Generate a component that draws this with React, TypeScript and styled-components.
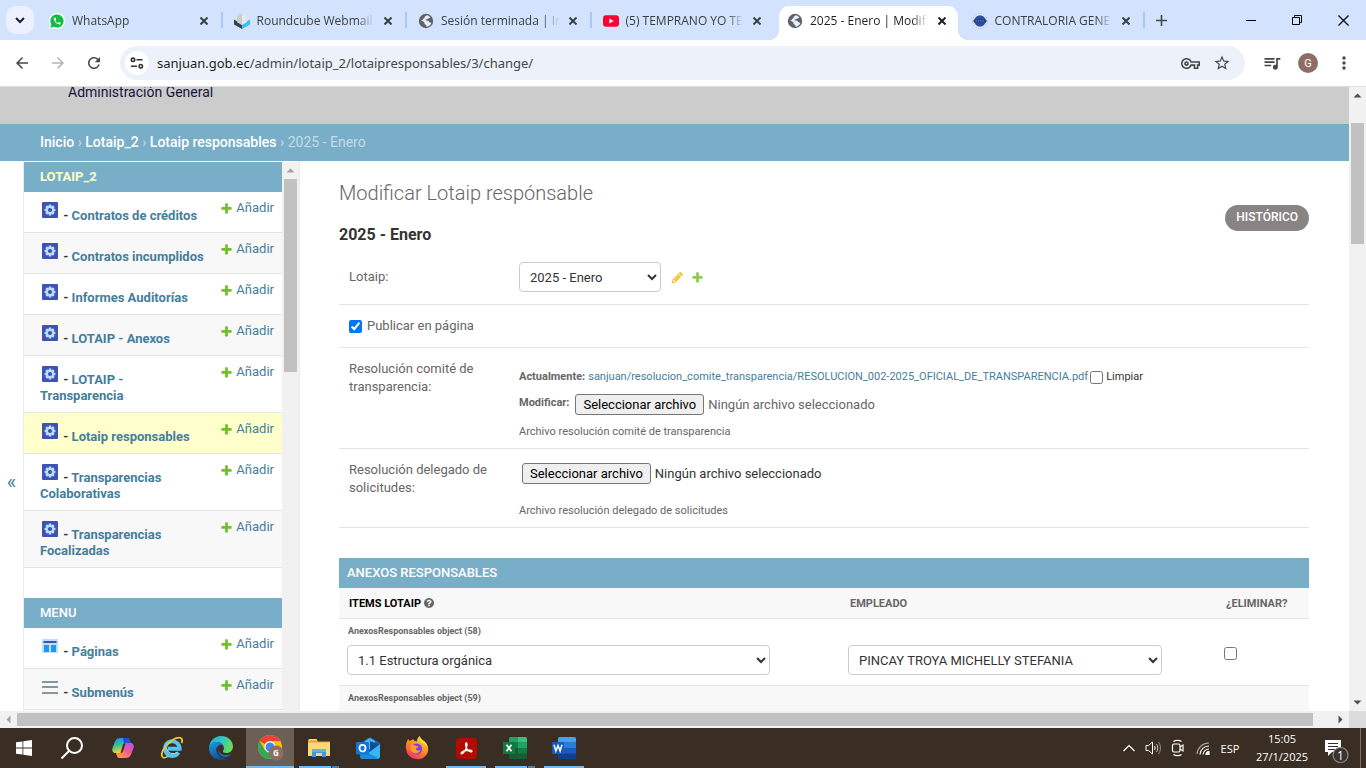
import React, { useRef, useState } from "react";
import styled, { createGlobalStyle, css } from "styled-components";
import {
  MdArrowBack,
  MdArrowForward,
  MdRefresh,
  MdOutlineVpnKey,
  MdStarOutline,
  MdQueueMusic,
  MdMoreVert,
  MdCall,
} from "react-icons/md";

const ui = '"Open Sans", "Noto Sans", sans-serif';

const GlobalStyle = createGlobalStyle`
  * { box-sizing: border-box; }
  body { margin: 0; font-family: Roboto, sans-serif; font-size: 13px; color: #333; background: #fff; }
  button, input, select { font-family: inherit; }
  h1, h2, p { margin: 0; }
  a { text-decoration: none; }
  svg { flex: none; }
`;

const Screen = styled.div`
  display: flex;
  flex-direction: column;
  height: 100vh;
  overflow: hidden;
`;

/* ---------- browser chrome ---------- */

const PlainButton = styled.button`
  display: flex;
  align-items: center;
  justify-content: center;
  padding: 0;
  border: 0;
  background: transparent;
  color: inherit;
`;

const TabStrip = styled.div`
  display: flex;
  flex: none;
  height: 40px;
  padding-left: 6px;
  background: #d3e3fd;
  font-family: ${ui};
`;

const TabSearch = styled(PlainButton)`
  flex: none;
  width: 28px;
  height: 28px;
  margin: 6px 4px 0 0;
  border-radius: 10px;
  background: #ebf1fe;
  color: #1f1f1f;
`;

const TabList = styled.div`
  display: grid;
  flex: 0 1 1107px;
  grid-template-columns: repeat(6, minmax(0, 1fr));
  min-width: 0;
`;

const Tab = styled.div<{ $active?: boolean; $divider?: boolean }>`
  position: relative;
  display: flex;
  align-items: center;
  min-width: 0;
  height: 34px;
  margin-top: 6px;
  padding: 0 15px 5px 11px;
  border-radius: 10px 10px 0 0;
  color: #3c4043;
  ${(p) =>
    p.$active &&
    css`
      margin-left: 3px;
      margin-right: 3px;
      padding: 0 12px 5px 8px;
      background: #fff;
      color: #1f1f1f;
      &::before, &::after {
        content: "";
        position: absolute;
        bottom: 0;
        width: 10px;
        height: 10px;
      }
      &::before {
        right: 100%;
        background: radial-gradient(circle at 0 0, transparent 10px, #fff 10px);
      }
      &::after {
        left: 100%;
        background: radial-gradient(circle at 100% 0, transparent 10px, #fff 10px);
      }
    `}
  ${(p) =>
    p.$divider &&
    css`
      border-radius: 0;
      background: linear-gradient(#a8c7fa, #a8c7fa) right 6px / 2px 16px no-repeat;
    `}
`;

const TabTitle = styled.span`
  flex: 1;
  min-width: 0;
  margin: 0 10px 0 7px;
  overflow: hidden;
  white-space: nowrap;
  font-size: 12px;
  line-height: 20px;
  mask-image: linear-gradient(to right, #000 calc(100% - 16px), transparent);
`;

const WindowButtons = styled.div`
  display: flex;
  margin-left: auto;
  color: #000;
`;

const WindowButton = styled(PlainButton)`
  width: 46px;
  height: 40px;
`;

const NewTab = styled(PlainButton)`
  width: 32px;
  height: 40px;
  color: #474747;
`;

const Toolbar = styled.div`
  display: flex;
  flex: none;
  align-items: center;
  height: 47px;
  border-bottom: 1px solid #dedede;
  background: #fff;
  color: #474747;
`;

const ToolButton = styled(PlainButton)<{ $dim?: boolean }>`
  width: 36px;
  height: 36px;
  color: ${(p) => (p.$dim ? "#b4b4b4" : "#474747")};
`;

const NavButtons = styled.div`
  display: flex;
  padding: 0 8px 0 4px;
`;

const AddressBar = styled.div`
  display: flex;
  flex: 1;
  align-items: center;
  min-width: 0;
  height: 34px;
  padding: 0 7px 0 5px;
  border-radius: 17px;
  background: #ecf1fa;
`;

const SiteInfo = styled(PlainButton)`
  flex: none;
  width: 24px;
  height: 24px;
  margin-right: 8px;
  border-radius: 12px;
  background: #fff;
`;

const Address = styled.div`
  flex: 1;
  min-width: 0;
  overflow: hidden;
  white-space: nowrap;
  font-family: "Noto Sans", "Open Sans", sans-serif;
  font-size: 13px;
  line-height: 20px;
  color: #474747;
  b { font-weight: 400; color: #1f1f1f; }
`;

const AddressButton = styled(PlainButton)`
  width: 32px;
  height: 32px;
`;

const ToolbarEnd = styled.div`
  display: flex;
  align-items: center;
  padding: 0 4px 0 9px;
`;

const Avatar = styled.span`
  display: flex;
  align-items: center;
  justify-content: center;
  width: 20px;
  height: 20px;
  border-radius: 10px;
  background: #8d6e63;
  color: #fff;
  font-size: 11px;
`;

/* ---------- scroll bars ---------- */

const BarArrow = styled(PlainButton)`
  flex: none;
  width: 17px;
  height: 17px;
`;

const BarTrack = styled.div`
  display: flex;
  flex: 1;
  min-width: 0;
  min-height: 0;
`;

const Bar = styled.div<{ $vertical?: boolean }>`
  display: flex;
  flex: none;
  background: #f1f1f1;
  ${(p) =>
    p.$vertical
      ? css`flex-direction: column; width: 17px;`
      : css`height: 17px;`}
`;

const VerticalThumb = styled.div<{ $start: number; $length: number }>`
  width: 13px;
  height: ${(p) => p.$length}px;
  margin: ${(p) => p.$start}px 2px 0;
  background: #c1c1c1;
`;

const HorizontalThumb = styled.div`
  flex: 1;
  height: 13px;
  margin: 2px 19px 2px 0;
  background: #c1c1c1;
`;

const Corner = styled.div`
  width: 17px;
  height: 17px;
  background: #dcdcdc;
`;

const Arrow = ({ turn, dim }: { turn: number; dim?: boolean }) => (
  <svg width="9" height="9" viewBox="0 0 9 9" aria-hidden="true">
    <path d="M0.5 6.5h8l-4-4z" fill={dim ? "#a3a3a3" : "#505050"} transform={`rotate(${turn} 4.5 4.5)`} />
  </svg>
);

function VerticalBar({ start, length, top }: { start: number; length: number; top?: boolean }) {
  return (
    <Bar $vertical>
      <BarArrow aria-label="Subir"><Arrow turn={0} dim={top} /></BarArrow>
      <BarTrack><VerticalThumb $start={start} $length={length} /></BarTrack>
      {!top && <BarArrow aria-label="Bajar"><Arrow turn={180} /></BarArrow>}
    </Bar>
  );
}

/* ---------- page ---------- */

const Viewport = styled.div`
  display: flex;
  flex: 1;
  min-height: 0;
`;

const Page = styled.div`
  display: flex;
  flex: 1;
  flex-direction: column;
  min-width: 0;
  overflow: hidden;
`;

const SiteHeader = styled.header`
  flex: none;
  height: 37px;
  padding-left: 68px;
  overflow: hidden;
  background: #ccc;
  color: #14143c;
  font-size: 14px;
  line-height: 10px;
`;

const Breadcrumbs = styled.nav`
  flex: none;
  padding: 8px 40px 9px;
  background: #79aec8;
  color: #c4dce8;
  font-size: 14px;
  line-height: 20px;
  a { color: #fff; font-weight: 500; }
`;

const Body = styled.div`
  display: flex;
  flex: 1;
  min-height: 0;
`;

const NavToggle = styled(PlainButton)`
  flex: none;
  align-items: flex-start;
  width: 24px;
  padding-top: 309px;
  border-right: 1px solid #eaeaea;
  color: #447e9b;
  font-size: 20px;
  line-height: 24px;
`;

const Sidebar = styled.nav`
  display: flex;
  flex: none;
  width: 276px;
  padding-top: 1px;
  border-right: 1px solid #eaeaea;
`;

const SidebarScroll = styled.div`
  flex: 1;
  overflow: hidden;
`;

const AppTable = styled.table`
  width: 100%;
  margin-bottom: 30px;
  border-collapse: collapse;
  table-layout: fixed;
`;

const AppCaption = styled.caption<{ $current?: boolean }>`
  height: 30px;
  padding: 7px 16px;
  background: #79aec8;
  text-align: left;
  line-height: 16px;
  font-weight: ${(p) => (p.$current ? 700 : 500)};
  a { color: ${(p) => (p.$current ? "#ffc" : "#fff")}; }
`;

const ModelRow = styled.tr<{ $current: boolean }>`
  border-bottom: 1px solid #e4e4e4;
  background: #fff;
  line-height: 16px;
  &:nth-child(even) { background: #f8f8f8; }
  ${(p) => p.$current && css`&& { background: #ffc; }`}
`;

const ModelName = styled.th`
  padding: 8px 4px 8px 16px;
  text-align: left;
  vertical-align: top;
  font-weight: 700;
  a { color: #447e9b; }
`;

const ModelAdd = styled.td`
  width: 70px;
  padding: 8px 8px 8px 0;
  vertical-align: top;
  text-align: right;
`;

const AddLink = styled.a`
  display: inline-flex;
  align-items: center;
  gap: 3px;
  color: #447e9b;
`;

const Main = styled.main`
  flex: 1;
  min-width: 0;
  padding: 20px 40px 0 39px;
  overflow: hidden;
`;

const Heading = styled.div`
  display: flex;
  justify-content: space-between;
  align-items: flex-start;
  margin-bottom: 5px;
`;

const PageTitle = styled.h1`
  margin-bottom: 20px;
  color: #666;
  font-size: 20px;
  font-weight: 300;
  line-height: 24px;
`;

const ObjectTitle = styled.h2`
  font-size: 16px;
  font-weight: 700;
  line-height: 20px;
`;

const HistoryLink = styled.a`
  margin-top: 24px;
  padding: 4px 11px 6px;
  border-radius: 15px;
  background: #888484;
  color: #fff;
  font-size: 12px;
  font-weight: 500;
  line-height: 16px;
  text-transform: uppercase;
`;

const FormRow = styled.div<{ $file?: boolean }>`
  display: flex;
  padding: 12px 10px ${(p) => (p.$file ? 9 : 12)}px;
  border-bottom: 1px solid #e4e4e4;
  line-height: 18px;
`;

const FieldLabel = styled.label`
  flex: none;
  width: 170px;
  padding-right: 10px;
  color: #666;
`;

const SelectLine = styled.div`
  display: flex;
  flex: 1;
  align-items: center;
  label { line-height: 30px; }
`;

const RelatedLinks = styled.div`
  display: flex;
  gap: 7px;
  margin-left: 10px;
`;

const IconLink = styled.a`
  display: flex;
  opacity: 0.8;
`;

const Select = styled.select<{ $width: number }>`
  display: block;
  width: ${(p) => p.$width}px;
  max-width: 100%;
  height: 30px;
  padding: 0 6px;
  border: 1px solid #ccc;
  border-radius: 4px;
  background: #fff;
  color: #333;
  font-size: 13px;
`;

const Check = styled.input`
  width: 13px;
  height: 13px;
  margin: 0;
`;

const CheckLabel = styled.label`
  display: flex;
  gap: 5px;
  align-items: center;
  color: #666;
`;

const FieldBody = styled.div`
  flex: 1;
  min-width: 0;
`;

const Current = styled.div`
  display: flex;
  align-items: center;
  gap: 2px;
  margin: 8px 0;
  font-size: 11px;
  a { color: #447e9b; }
  b { color: #666; margin-right: 1px; }
`;

const ClearLabel = styled.label`
  display: flex;
  gap: 3px;
  align-items: center;
`;

const FileLine = styled.div<{ $inset?: boolean }>`
  display: flex;
  align-items: center;
  gap: 4px;
  height: 21px;
  margin: ${(p) => (p.$inset ? "2px 0 0 3px" : "0")};
  color: ${(p) => (p.$inset ? "#333" : "#666")};
  label { align-self: flex-start; margin-right: 2px; font-size: 11px; font-weight: 700; line-height: 18px; }
`;

const FileButton = styled.button`
  height: 21px;
  padding: 0 7px;
  border: 1px solid #767676;
  border-radius: 3px;
  background: #efefef;
  color: #000;
  font-size: 13px;
  line-height: 19px;
`;

const Help = styled.p<{ $gap: number }>`
  margin-top: ${(p) => p.$gap}px;
  color: #666;
  font-size: 11px;
  line-height: 14px;
`;

const Inline = styled.section`
  margin-top: 30px;
`;

const InlineTitle = styled.h2`
  padding: 7px 8px;
  background: #79aec8;
  color: #fff;
  font-size: 13px;
  font-weight: 500;
  line-height: 16px;
`;

const InlineTable = styled.table`
  width: 100%;
  border-collapse: collapse;
  table-layout: fixed;
`;

const HeadCell = styled.th<{ $width?: number; $required?: boolean }>`
  width: ${(p) => (p.$width ? `${p.$width}px` : "auto")};
  padding: 8px 10px 6px;
  border-bottom: 1px solid #e4e4e4;
  background: #f8f8f8;
  color: ${(p) => (p.$required ? "#000" : "#666")};
  text-align: left;
  font-size: 11px;
  font-weight: 700;
  line-height: 16px;
  svg { vertical-align: -1px; }
`;

const InlineRow = styled.tr`
  border-bottom: 1px solid #e4e4e4;
  &:nth-child(even) { background: #f8f8f8; }
`;

const Cell = styled.td<{ $check?: boolean }>`
  padding: 4px 8px ${(p) => (p.$check ? 25 : 10)}px;
  vertical-align: bottom;
  line-height: 0;
`;

const Original = styled.p`
  margin: 0 1px 6px;
  color: #666;
  font-size: 9px;
  font-weight: 700;
  line-height: 16px;
`;

/* ---------- taskbar ---------- */

const Taskbar = styled.footer`
  display: flex;
  flex: none;
  align-items: stretch;
  height: 40px;
  background: #3a2e24;
  color: #fff;
  font-family: ${ui};
`;

const TaskSystem = styled.div`
  display: flex;
  margin-right: 3px;
`;

const TaskApps = styled.div`
  display: flex;
  gap: 1px;
`;

type Mark = "none" | "full" | "single" | "stack";

const marks: Record<Mark, string> = {
  none: "none",
  full: "linear-gradient(#76b9ed, #76b9ed) left bottom / 48px 2px no-repeat, #6b6058",
  single: "linear-gradient(#76b9ed, #76b9ed) 4px bottom / 40px 2px no-repeat",
  stack:
    "linear-gradient(to right, #76b9ed 32px, #3a2e24 32px, #3a2e24 33px, #56809f 33px) 4px bottom / 40px 2px no-repeat",
};

const TaskButton = styled(PlainButton)<{ $mark?: Mark }>`
  width: 48px;
  background: ${(p) => marks[p.$mark ?? "none"]};
`;

const Tray = styled.div`
  display: flex;
  align-items: center;
  margin-left: auto;
  font-size: 11px;
  line-height: 18px;
`;

const TrayButton = styled(PlainButton)<{ $width: number }>`
  width: ${(p) => p.$width}px;
  height: 40px;
  font-size: 11px;
`;

const Clock = styled.div`
  width: 76px;
  text-align: center;
`;

const ShowDesktop = styled.div`
  width: 6px;
  height: 40px;
  border-left: 1px solid #7a726b;
`;

/* ---------- drawings ---------- */

const Cross = ({ size = 8, width = 2 }: { size?: number; width?: number }) => (
  <svg width={size} height={size} viewBox={`0 0 ${size} ${size}`} stroke="currentColor" strokeWidth={width}>
    <path d={`M.5 .5l${size - 1} ${size - 1}M${size - 0.5} .5l-${size - 1} ${size - 1}`} />
  </svg>
);

const WhatsappIcon = () => (
  <svg width="16" height="16" viewBox="0 0 16 16">
    <circle cx="8" cy="8" r="8" fill="#f4fff6" />
    <path d="M0 16l1.2-4.5 3.4 3.3z" fill="#f4fff6" />
    <path d="M1.3 14.7l1-3.3A6.6 6.6 0 1 1 4.8 13.8z" fill="#12bd45" />
    <MdCall x="3.6" y="3.6" size={9} color="#fff" />
  </svg>
);

const RoundcubeIcon = () => (
  <svg width="16" height="16" viewBox="0 0 16 16">
    <path d="M0 6.500l8 4.500v5L0 11.500z" fill="#37424a" />
    <path d="M16 6.500l-8 4.500v5l8-4.500z" fill="#37beff" />
    <path d="M3 5.500a5 5 0 0 1 10 0V9l-5 3-5-3z" fill="#e6e8e8" />
    <path d="M8 .5a5 5 0 0 0-5 5V9l5 3z" fill="#c9cdcc" />
  </svg>
);

const GlobeIcon = () => (
  <svg width="16" height="16" viewBox="0 0 16 16">
    <circle cx="8" cy="8" r="7.2" fill="#5f6368" />
    <path d="M8.600 2.300c1.500.2 3 1 3.900 2.200-.9.300-1.400 1-2.400 1-.9 0-1 .9-1.900 1-.9.2-.7 1 .1 1.100 1.200.1 2.300.2 2.700 1.200.2.800.9.600 1.600.7.500.2.700.7.500 1.200-.9 1.700-2.500 2.900-4.700 3 .1-1.100-.2-1.900-1.100-2.100-.9-.3-.9-1.200-.8-2L2.600 6.700c.3 0 .5.3 1.200.3.900 0 1.300-.2 1.300-1 0-.7 1.200-.4 1.500-1.100.1-.5-.2-.9.4-1.300.5-.4 1.300-.6 1.600-1.300z" fill="#e8eefb" />
  </svg>
);

const YoutubeIcon = () => (
  <svg width="16" height="16" viewBox="0 0 16 16">
    <rect y="2.300" width="16" height="11.400" rx="3" fill="#f03" />
    <path d="M6.300 5.500v5L10.700 8z" fill="#fff" />
  </svg>
);

const SealIcon = () => (
  <svg width="16" height="16" viewBox="0 0 16 16">
    <circle cx="8" cy="8" r="7.400" fill="#e9effc" stroke="#a9bce4" strokeDasharray="1.500 1" />
    <circle cx="8" cy="8" r="5.800" fill="#2b4fa0" />
    <rect x="1.500" y="6.500" width="13" height="3" rx="1" fill="#203a80" />
    <path d="M3.500 8h9" stroke="#93a9d8" strokeWidth=".8" strokeDasharray="1.500 .8" />
  </svg>
);

const TuneIcon = () => (
  <svg width="14" height="14" viewBox="0 0 14 14" fill="none" stroke="#333" strokeWidth="1.600">
    <circle cx="3" cy="3.800" r="1.700" />
    <path d="M6.500 3.800H12.500M1 10.200H7" />
    <circle cx="10.800" cy="10.200" r="1.700" />
  </svg>
);

const GearTile = () => (
  <svg width="20" height="20" viewBox="0 0 20 20">
    <rect x="2" y="2" width="16" height="16" rx="1" fill="#3f51b5" />
    <g fill="#bbdefb">
      {[0, 45, 90, 135].map((a) => (
        <rect key={a} x="8.700" y="4.600" width="2.600" height="10.800" rx=".5" transform={`rotate(${a} 10 10)`} />
      ))}
      <circle cx="10" cy="10" r="4.100" />
    </g>
    <circle cx="10" cy="10" r="2.100" fill="#3f51b5" />
  </svg>
);

const PagesIcon = () => (
  <svg width="20" height="20" viewBox="0 0 20 20">
    <rect x="2" y="3" width="16" height="14" fill="#bbdefb" />
    <rect x="3.500" y="5" width="13" height="2" fill="#3f51b5" />
    <path d="M4 9h5v7H4zM11 9h5v7h-5z" fill="#2196f3" />
  </svg>
);

const MenuIcon = () => (
  <svg width="20" height="20" viewBox="0 0 20 20" stroke="#8497a2" strokeWidth="2">
    <path d="M2 5h16M2 10h16M2 16h16" />
  </svg>
);

const PlusIcon = () => (
  <svg width="13" height="13" viewBox="0 0 1792 1792" fill="#70bf2b">
    <path d="M1600 796v192q0 40-28 68t-68 28h-416v416q0 40-28 68t-68 28h-192q-40 0-68-28t-28-68v-416h-416q-40 0-68-28t-28-68v-192q0-40 28-68t68-28h416v-416q0-40 28-68t68-28h192q40 0 68 28t28 68v416h416q40 0 68 28t28 68z" />
  </svg>
);

const PencilIcon = () => (
  <svg width="13" height="13" viewBox="0 0 1792 1792" fill="#efb80b">
    <path d="M491 1536l91-91-235-235-91 91v107h128v128h107zm523-928q0-22-22-22-10 0-17 7l-542 542q-7 7-7 17 0 22 22 22 10 0 17-7l542-542q7-7 7-17zm-54-192l416 416-832 832h-416v-416zm683 96q0 53-37 90l-166 166-416-416 166-165q36-38 90-38 53 0 91 38l235 234q37 39 37 91z" />
  </svg>
);

const HelpIcon = () => (
  <svg width="10" height="10" viewBox="128 128 1536 1536" fill="#666">
    <path d="M1024 1376v-192q0-14-9-23t-23-9h-192q-14 0-23 9t-9 23v192q0 14 9 23t23 9h192q14 0 23-9t9-23zm256-672q0-88-55.5-163t-138.5-116-170-41q-243 0-371 213-15 24 8 42l132 100q7 6 19 6 16 0 25-12 53-68 86-92 34-24 86-24 48 0 85.500 26t37.500 59q0 38-20 61t-68 45q-63 28-115.500 86.500t-52.500 125.500v36q0 14 9 23t23 9h192q14 0 23-9t9-23q0-19 21.500-49.500t54.500-49.500q32-18 49-28.500t46-35 44.500-48 28-60.500 12.500-81zm384 192q0 209-103 385.500t-279.500 279.500-385.500 103-385.500-103-279.500-279.500-103-385.500 103-385.500 279.500-279.500 385.500-103 385.500 103 279.500 279.500 103 385.500z" />
  </svg>
);

const WindowsIcon = () => (
  <svg width="16" height="16" viewBox="0 0 16 16" fill="#fff">
    <path d="M0 2.300l6.500-.9v6.200H0zM7.300 1.300L16 0v7.600H7.300zM0 8.400h6.500v6.200L0 13.700zM7.300 8.400H16V16l-8.700-1.300z" />
  </svg>
);

const SearchIcon = () => (
  <svg width="24" height="24" viewBox="0 0 24 24" fill="none" stroke="#fff" strokeWidth="2">
    <circle cx="14.500" cy="9.500" r="7.500" />
    <path d="M9 15l-7.500 7.500" />
  </svg>
);

const CopilotIcon = () => (
  <svg width="24" height="24" viewBox="0 0 24 24">
    <defs>
      <linearGradient id="cpA" x1="0" y1="0" x2="0.300" y2="1">
        <stop offset="0" stopColor="#1b8df0" /><stop offset=".5" stopColor="#2fbf9b" /><stop offset="1" stopColor="#ffd02e" />
      </linearGradient>
      <linearGradient id="cpB" x1="1" y1="0" x2="0.300" y2="1">
        <stop offset="0" stopColor="#a45cf5" /><stop offset=".5" stopColor="#f0559b" /><stop offset="1" stopColor="#ff9a4a" />
      </linearGradient>
    </defs>
    <path d="M10 2h6c1.500 0 2.200.8 2.700 2.500L19.500 7h-5c-1.500 0-2.300.8-2.800 2.500L9.500 17H4.500C1.500 17 .9 14.500 1.500 12L4 5.500C4.900 3 6.500 2 10 2z" fill="url(#cpA)" />
    <path d="M12 2h4c1.500 0 2.200.8 2.700 2.500L19.500 7h-5L13 8z" fill="#1d4fd8" />
    <path d="M14 22H8.500c-1.500 0-2.200-.8-2.700-2.500L5 17h4.500c1.500 0 2.300-.8 2.800-2.500L14.500 7h5c3 0 3.600 2.500 3 5L20 18.500c-.9 2.500-2.500 3.500-6 3.500z" fill="url(#cpB)" />
  </svg>
);

const ExplorerEIcon = () => (
  <svg width="24" height="24" viewBox="0 0 24 24" fill="none">
    <path d="M18.500 16.500A7.300 7.300 0 1 1 19.600 12.800H8" stroke="#53c3ef" strokeWidth="4" />
    <path d="M17.500 16A6.600 6.600 0 0 1 6.500 12" stroke="#a4e4fa" strokeWidth="1" />
    <path d="M2.800 21.300C-.5 18 5 8.500 12.500 4S23.800 2.300 21.500 7" stroke="#f5c52d" strokeWidth="1.800" />
    <path d="M2.800 21.300c1.500 1 4-.2 5.500-1.300" stroke="#f5c52d" strokeWidth="1.500" />
  </svg>
);

const EdgeIcon = () => (
  <svg width="24" height="24" viewBox="0 0 24 24">
    <defs>
      <linearGradient id="edA" x1="0" y1="0" x2="1" y2="0.300">
        <stop offset="0" stopColor="#1fa7e0" /><stop offset=".6" stopColor="#35c6c0" /><stop offset="1" stopColor="#66dc55" />
      </linearGradient>
      <linearGradient id="edB" x1="0" y1="0" x2="0.500" y2="1">
        <stop offset="0" stopColor="#1d9be0" /><stop offset="1" stopColor="#0b4fa0" />
      </linearGradient>
    </defs>
    <path d="M0 11.500C.5 5 5.500 0 12 0c7 0 12 5 12 10.500 0 4-3 6.500-6.300 6.500-3 0-4.200-1-3.700-2 .8-1 1-1.700.9-3C14.600 8.500 11.500 6 8 6c-4 0-7 2.500-8 5.500z" fill="url(#edA)" />
    <path d="M0 12c0-4 4-6 8-6 2.500 0 5 1 6.300 3C10 7.500 7 11 7.300 14.500c.4 4.500 5 8.500 10.200 7.800C12 26 0 23 0 12z" fill="url(#edB)" />
    <path d="M9 13c-.5 4 3 8.500 8 8 2.500-.3 4.500-1.800 5.500-3.500-3 2-9 2.500-12-1C9.500 15.500 9 14.500 9 13z" fill="#1273c4" />
  </svg>
);

const ChromeIcon = () => (
  <svg width="28" height="26" viewBox="0 0 28 26">
    <circle cx="14" cy="12" r="12" fill="#fbbc04" />
    <path d="M3.600 6A12 12 0 0 1 24.400 6H14a6 6 0 0 0-5.200 3z" fill="#ea4335" />
    <path d="M3.600 6A12 12 0 0 0 14 24l5.200-9H8.800z" fill="#34a853" />
    <circle cx="14" cy="12" r="5.700" fill="#fff" />
    <circle cx="14" cy="12" r="4.500" fill="#4285f4" />
    <circle cx="20" cy="18" r="7.500" fill="#8d6e63" />
    <text x="20" y="21" textAnchor="middle" fontSize="8" fontWeight="700" fontFamily="Open Sans, sans-serif" fill="#fff">G</text>
  </svg>
);

const FolderIcon = () => (
  <svg width="22" height="20" viewBox="0 0 22 20">
    <path d="M0 1.500h8l2 2h12V18H0z" fill="#e8a33d" />
    <path d="M1 1h7.500l1 1.500H1z" fill="#f8d779" />
    <path d="M0 4.500h22V18H0z" fill="#fcd978" />
    <path d="M4 11h14v8h-4v-4H8v4H4z" fill="#3b9ae0" />
    <path d="M4 11h14v3H4z" fill="#5bb3f0" />
  </svg>
);

const OutlookIcon = () => (
  <svg width="24" height="22" viewBox="0 0 24 22">
    <path d="M4 6L14 0l10 6v13a2 2 0 0 1-2 2H6z" fill="#1066b5" />
    <path d="M9 4l5-3 5 3v8H9z" fill="#50b8f0" />
    <path d="M14 4l10 4-10 8z" fill="#0f4d9b" />
    <path d="M24 7v12a3 3 0 0 1-3 3H6l9-8z" fill="#35b8f1" />
    <path d="M4 12l19 9.500-2 .5H6a2 2 0 0 1-2-2z" fill="#1e8bdc" />
    <rect y="5" width="13" height="12.500" rx="1.500" fill="#0f78d4" />
    <ellipse cx="6.500" cy="11.200" rx="3" ry="3.300" fill="none" stroke="#fff" strokeWidth="1.700" />
  </svg>
);

const FirefoxIcon = () => (
  <svg width="24" height="24" viewBox="0 0 24 24">
    <defs>
      <linearGradient id="ffA" x1="0.800" y1="0" x2="0.200" y2="1">
        <stop offset="0" stopColor="#ffe13a" /><stop offset=".5" stopColor="#ff8a1f" /><stop offset="1" stopColor="#f5286b" />
      </linearGradient>
    </defs>
    <path d="M1 13C0 8 2.500 5 3 3c1 .6 1.600 1.600 2 2.500C6 4 7 3.500 8.500 3.500 9 4.500 10 5.500 12 5.500 11.500 3 13.500 1 15 0c0 3 3 4 5 6 3.500 3.500 4 8 2 12a11.500 11.500 0 0 1-21-5z" fill="url(#ffA)" />
    <circle cx="11.500" cy="13" r="5.600" fill="#7542e5" />
    <path d="M5.500 9.500c2-1.200 4-.8 5.500.5 1.500 0 2.500.3 2.500 1.200-1.500.4-2.500 1-2.500 2 .7 1.400 2.800 1.800 4.500.6-1 4-6.500 5-9 1.500-1.300-1.800-1.500-4-1-5.800z" fill="#ff9a2b" />
    <path d="M15 0c0 3 3 4 5 6 1.500 1.500 2.400 3.500 2.600 5.500-1-2-2-3-3.100-3.500C17 7 14 5.500 15 0z" fill="#ffe24a" />
  </svg>
);

const AcrobatIcon = () => (
  <svg width="21" height="21" viewBox="0 0 21 21">
    <rect width="21" height="21" rx="3.500" fill="#b30b00" />
    <path d="M10.200 5c1.400 0 .8 3.200-.2 5.500-1.100 2.500-3 5.300-4.300 5.300-1.600-.3.200-2.600 4.300-3.300 3.500-.7 6-.5 6 .6-.1 1.600-3.500.6-5-2C9.900 9.200 9 5 10.200 5z" fill="none" stroke="#fff" strokeWidth="1.300" />
  </svg>
);

const ExcelIcon = () => (
  <svg width="24" height="22" viewBox="0 0 24 22">
    <rect x="6" width="18" height="22" rx="1.500" fill="#185c37" />
    <path d="M6 1.500A1.500 1.500 0 0 1 7.500 0H15v5.500H6z" fill="#21a366" />
    <path d="M15 0h7.500A1.500 1.500 0 0 1 24 1.500v4h-9z" fill="#33c481" />
    <path d="M6 5.500h9V11H6zM15 11h9v5.500h-9z" fill="#107c41" />
    <path d="M15 5.500h9V11h-9z" fill="#21a366" />
    <rect y="5" width="12" height="12" rx="1" fill="#0f7a40" />
    <path d="M3.500 7.700l5 6.600M8.500 7.700l-5 6.600" stroke="#fff" strokeWidth="1.700" />
  </svg>
);

const WordIcon = () => (
  <svg width="24" height="22" viewBox="0 0 24 22">
    <rect x="6" width="18" height="22" rx="1.500" fill="#103f91" />
    <path d="M6 5.500v-4A1.500 1.500 0 0 1 7.500 0h15A1.500 1.500 0 0 1 24 1.500v4z" fill="#41a5ee" />
    <path d="M6 5.500h18V11H6z" fill="#2b7cd3" />
    <path d="M6 11h18v5.500H6z" fill="#185abd" />
    <rect y="5" width="12" height="12" rx="1" fill="#185abd" />
    <path d="M2 7.800l1.900 6.200L6 8.500 8.100 14 10 7.800" fill="none" stroke="#fff" strokeWidth="1.500" />
  </svg>
);

const SpeakerIcon = () => (
  <svg width="17" height="16" viewBox="0 0 17 16" fill="none" stroke="#fff">
    <path d="M1 5.500h2.500l4-3.500v12l-4-3.500H1z" />
    <path d="M9.500 6c.8 1.200.8 2.800 0 4" />
    <path d="M11.500 4c1.700 2.400 1.700 5.600 0 8" opacity=".7" />
    <path d="M13.500 2c2.600 3.500 2.600 8.500 0 12" opacity=".45" />
  </svg>
);

const MeetIcon = () => (
  <svg width="14" height="18" viewBox="0 0 14 18" fill="none" stroke="#fff" strokeWidth="1.200">
    <rect x="1.500" y="5" width="7.500" height="8" rx="1.500" />
    <path d="M9 8l3-2v6l-3-2M2.500 2.500c2-1.500 6-1.500 8 0M2.500 15.500c2 1.500 6 1.500 8 0" />
  </svg>
);

const WifiIcon = () => (
  <svg width="14" height="14" viewBox="0 0 14 14" fill="none" stroke="#fff" strokeWidth="1.100">
    <path d="M1 13A12 12 0 0 1 13 2" opacity=".6" />
    <path d="M4 13.500A9 9 0 0 1 13 5M7 13.500a6 6 0 0 1 6-5.500" />
    <path d="M10 13.500a3 3 0 0 1 3-3V13.500z" fill="#fff" />
  </svg>
);

const NoticeIcon = () => (
  <svg width="34" height="32" viewBox="0 0 34 32">
    <path d="M2 8h16v12h-9l-4 4v-4H2z" fill="#fff" />
    <path d="M5 11.500h10M5 14.500h10M5 17.500h7" stroke="#3a2e24" />
    <circle cx="17.500" cy="23" r="7.500" fill="#37342f" stroke="#8d8d8d" strokeWidth="1.200" />
    <text x="17.500" y="27.500" textAnchor="middle" fontSize="12" fontFamily="Open Sans, sans-serif" fill="#fff">1</text>
  </svg>
);

/* ---------- data ---------- */

const tabs = [
  { title: "WhatsApp", icon: <WhatsappIcon />, divider: true },
  { title: "Roundcube Webmail", icon: <RoundcubeIcon />, divider: true },
  { title: "Sesión terminada | Inf", icon: <GlobeIcon />, divider: true },
  { title: "(5) TEMPRANO YO TE", icon: <YoutubeIcon /> },
  { title: "2025 - Enero | Modific", icon: <GlobeIcon />, active: true },
  { title: "CONTRALORIA GENE", icon: <SealIcon />, divider: true },
];

const lotaipModels = [
  "Contratos de créditos",
  "Contratos incumplidos",
  "Informes Auditorías",
  "LOTAIP - Anexos",
  "LOTAIP - Transparencia",
  "Lotaip responsables",
  "Transparencias Colaborativas",
  "Transparencias Focalizadas",
].map((name) => ({ name, icon: <GearTile /> }));

const menuModels = [
  { name: "Páginas", icon: <PagesIcon /> },
  { name: "Submenús", icon: <MenuIcon /> },
];

const annexes = [
  { id: 58, item: "1.1 Estructura orgánica", person: "PINCAY TROYA MICHELLY STEFANIA" },
  { id: 59, item: "1.1 Estructura orgánica", person: "PINCAY TROYA MICHELLY STEFANIA" },
];

/* ---------- parts ---------- */

function AppGroup({ title, current, models }: {
  title: string;
  current?: string;
  models: { name: string; icon: React.ReactNode }[];
}) {
  return (
    <AppTable>
      <AppCaption $current={!!current}><a href="#app">{title}</a></AppCaption>
      <tbody>
        {models.map((m) => (
          <ModelRow key={m.name} $current={m.name === current}>
            <ModelName scope="row">{m.icon} - <a href="#model">{m.name}</a></ModelName>
            <ModelAdd><AddLink href="#add"><PlusIcon />Añadir</AddLink></ModelAdd>
          </ModelRow>
        ))}
      </tbody>
    </AppTable>
  );
}

function FilePicker({ id, label, inset }: { id: string; label?: string; inset?: boolean }) {
  const input = useRef<HTMLInputElement>(null);
  const [name, setName] = useState("Ningún archivo seleccionado");
  return (
    <FileLine $inset={inset}>
      {label && <label htmlFor={id}>{label}</label>}
      <input ref={input} type="file" hidden onChange={(e) => setName(e.target.files?.[0]?.name ?? name)} />
      <FileButton id={id} type="button" onClick={() => input.current?.click()}>Seleccionar archivo</FileButton>
      <span>{name}</span>
    </FileLine>
  );
}

export default function App() {
  return (
    <Screen>
      <GlobalStyle />
      <TabStrip>
        <TabSearch aria-label="Buscar pestañas">
          <svg width="10" height="10" viewBox="0 0 10 10" fill="none" stroke="currentColor" strokeWidth="2"><path d="M1 3l4 4 4-4" /></svg>
        </TabSearch>
        <TabList>
          {tabs.map((t) => (
            <Tab key={t.title} $active={t.active} $divider={t.divider}>
              {t.icon}
              <TabTitle>{t.title}</TabTitle>
              <PlainButton aria-label="Cerrar pestaña"><Cross /></PlainButton>
            </Tab>
          ))}
        </TabList>
        <NewTab aria-label="Nueva pestaña">
          <svg width="11" height="11" viewBox="0 0 11 11" stroke="currentColor" strokeWidth="1.600"><path d="M5.500 0v11M0 5.500h11" /></svg>
        </NewTab>
        <WindowButtons>
          <WindowButton aria-label="Minimizar">
            <svg width="10" height="10" viewBox="0 0 10 10" stroke="currentColor"><path d="M0 5.500h10" /></svg>
          </WindowButton>
          <WindowButton aria-label="Restaurar">
            <svg width="10" height="10" viewBox="0 0 10 10" fill="none" stroke="currentColor"><path d="M.5 2.500h7v7h-7zM2.500 2.500v-2h7v7h-2" /></svg>
          </WindowButton>
          <WindowButton aria-label="Cerrar"><Cross size={11} width={1.2} /></WindowButton>
        </WindowButtons>
      </TabStrip>

      <Toolbar>
        <NavButtons>
          <ToolButton aria-label="Atrás"><MdArrowBack size={18} /></ToolButton>
          <ToolButton aria-label="Adelante" $dim><MdArrowForward size={18} /></ToolButton>
          <ToolButton aria-label="Recargar"><MdRefresh size={18} /></ToolButton>
        </NavButtons>
        <AddressBar>
          <SiteInfo aria-label="Información del sitio"><TuneIcon /></SiteInfo>
          <Address><b>sanjuan.gob.ec</b>/admin/lotaip_2/lotaipresponsables/3/change/</Address>
          <AddressButton aria-label="Contraseñas"><MdOutlineVpnKey size={19} /></AddressButton>
          <AddressButton aria-label="Favorito"><MdStarOutline size={18} /></AddressButton>
        </AddressBar>
        <ToolbarEnd>
          <ToolButton aria-label="Control multimedia"><MdQueueMusic size={20} /></ToolButton>
          <ToolButton aria-label="Perfil"><Avatar>G</Avatar></ToolButton>
          <ToolButton aria-label="Menú"><MdMoreVert size={20} /></ToolButton>
        </ToolbarEnd>
      </Toolbar>

      <Viewport>
        <Page>
          <SiteHeader>Administración General</SiteHeader>
          <Breadcrumbs>
            <a href="#home">Inicio</a> › <a href="#app">Lotaip_2</a> › <a href="#list">Lotaip responsables</a> › 2025 - Enero
          </Breadcrumbs>
          <Body>
            <NavToggle aria-label="Alternar navegación">«</NavToggle>
            <Sidebar>
              <SidebarScroll>
                <AppGroup title="LOTAIP_2" current="Lotaip responsables" models={lotaipModels} />
                <AppGroup title="MENU" models={menuModels} />
              </SidebarScroll>
              <VerticalBar start={0} length={193} top />
            </Sidebar>
            <Main>
              <Heading>
                <div>
                  <PageTitle>Modificar Lotaip respónsable</PageTitle>
                  <ObjectTitle>2025 - Enero</ObjectTitle>
                </div>
                <HistoryLink href="#history">Histórico</HistoryLink>
              </Heading>
              <form onSubmit={(e) => e.preventDefault()}>
                <FormRow>
                  <SelectLine>
                    <FieldLabel htmlFor="lotaip">Lotaip:</FieldLabel>
                    <Select id="lotaip" $width={142}><option>2025 - Enero</option></Select>
                    <RelatedLinks>
                      <IconLink href="#edit" aria-label="Modificar"><PencilIcon /></IconLink>
                      <IconLink href="#new" aria-label="Añadir"><PlusIcon /></IconLink>
                    </RelatedLinks>
                  </SelectLine>
                </FormRow>
                <FormRow>
                  <CheckLabel><Check type="checkbox" defaultChecked />Publicar en página</CheckLabel>
                </FormRow>
                <FormRow $file>
                  <FieldLabel htmlFor="committee">Resolución comité de transparencia:</FieldLabel>
                  <FieldBody>
                    <Current>
                      <b>Actualmente:</b>
                      <a href="#pdf">sanjuan/resolucion_comite_transparencia/RESOLUCION_002-2025_OFICIAL_DE_TRANSPARENCIA.pdf</a>
                      <ClearLabel><Check type="checkbox" />Limpiar</ClearLabel>
                    </Current>
                    <FilePicker id="committee" label="Modificar:" />
                    <Help $gap={10}>Archivo resolución comité de transparencia</Help>
                  </FieldBody>
                </FormRow>
                <FormRow $file>
                  <FieldLabel htmlFor="delegate">Resolución delegado de solicitudes:</FieldLabel>
                  <FieldBody>
                    <FilePicker id="delegate" inset />
                    <Help $gap={20}>Archivo resolución delegado de solicitudes</Help>
                  </FieldBody>
                </FormRow>
                <Inline>
                  <InlineTitle>ANEXOS RESPONSABLES</InlineTitle>
                  <InlineTable>
                    <thead>
                      <tr>
                        <HeadCell $required>ITEMS LOTAIP <HelpIcon /></HeadCell>
                        <HeadCell $width={376}>EMPLEADO</HeadCell>
                        <HeadCell $width={93}>¿ELIMINAR?</HeadCell>
                      </tr>
                    </thead>
                    <tbody>
                      {annexes.map((a) => (
                        <InlineRow key={a.id}>
                          <Cell>
                            <Original>AnexosResponsables object ({a.id})</Original>
                            <Select $width={423} aria-label="Items lotaip"><option>{a.item}</option></Select>
                          </Cell>
                          <Cell><Select $width={314} aria-label="Empleado"><option>{a.person}</option></Select></Cell>
                          <Cell $check><Check type="checkbox" aria-label="¿Eliminar?" /></Cell>
                        </InlineRow>
                      ))}
                    </tbody>
                  </InlineTable>
                </Inline>
              </form>
            </Main>
          </Body>
        </Page>
        <VerticalBar start={19} length={121} />
      </Viewport>
      <Bar>
        <BarArrow aria-label="Izquierda"><Arrow turn={-90} dim /></BarArrow>
        <BarTrack><HorizontalThumb /></BarTrack>
        <BarArrow aria-label="Derecha"><Arrow turn={90} /></BarArrow>
        <Corner />
      </Bar>

      <Taskbar>
        <TaskSystem>
          <TaskButton aria-label="Inicio"><WindowsIcon /></TaskButton>
          <TaskButton aria-label="Buscar"><SearchIcon /></TaskButton>
        </TaskSystem>
        <TaskApps>
          <TaskButton aria-label="Copilot"><CopilotIcon /></TaskButton>
          <TaskButton aria-label="Internet Explorer"><ExplorerEIcon /></TaskButton>
          <TaskButton aria-label="Edge"><EdgeIcon /></TaskButton>
          <TaskButton aria-label="Chrome" $mark="full"><ChromeIcon /></TaskButton>
          <TaskButton aria-label="Explorador de archivos" $mark="stack"><FolderIcon /></TaskButton>
          <TaskButton aria-label="Outlook"><OutlookIcon /></TaskButton>
          <TaskButton aria-label="Firefox"><FirefoxIcon /></TaskButton>
          <TaskButton aria-label="Acrobat" $mark="single"><AcrobatIcon /></TaskButton>
          <TaskButton aria-label="Excel" $mark="stack"><ExcelIcon /></TaskButton>
          <TaskButton aria-label="Word" $mark="single"><WordIcon /></TaskButton>
        </TaskApps>
        <Tray>
          <TrayButton $width={24} aria-label="Iconos ocultos">
            <svg width="12" height="8" viewBox="0 0 12 8" fill="none" stroke="#fff" strokeWidth="1.200"><path d="M.5 7L6 1.500 11.500 7" /></svg>
          </TrayButton>
          <TrayButton $width={24} aria-label="Volumen"><SpeakerIcon /></TrayButton>
          <TrayButton $width={25} aria-label="Reunirse"><MeetIcon /></TrayButton>
          <TrayButton $width={26} aria-label="Red"><WifiIcon /></TrayButton>
          <TrayButton $width={28}>ESP</TrayButton>
          <Clock>15:05<br />27/1/2025</Clock>
          <TrayButton $width={40} aria-label="Notificaciones"><NoticeIcon /></TrayButton>
          <ShowDesktop />
        </Tray>
      </Taskbar>
    </Screen>
  );
}
